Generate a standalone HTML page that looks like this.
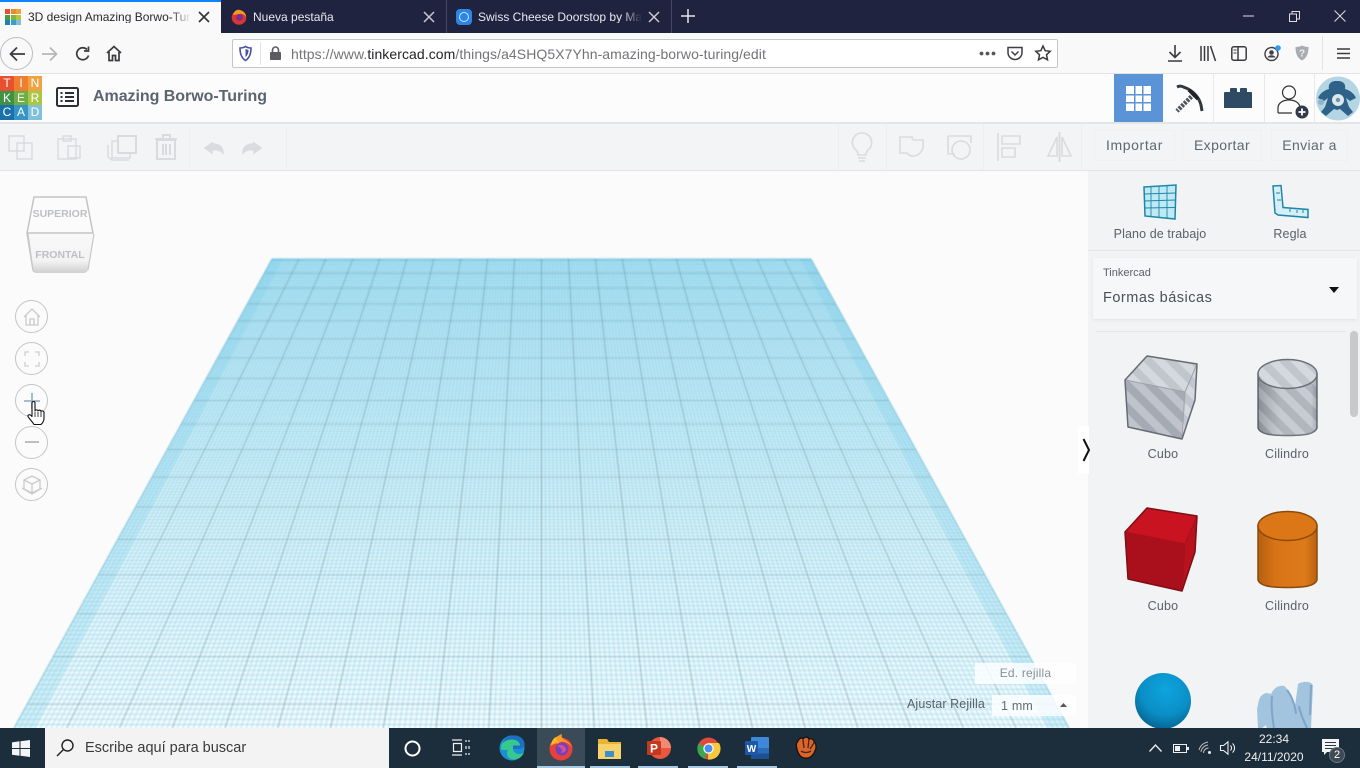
<!DOCTYPE html>
<html lang="es"><head><meta charset="utf-8"><title>3D design Amazing Borwo-Turing</title>
<style>
html,body{margin:0;padding:0;width:1360px;height:768px;overflow:hidden;background:#f9f9fa;font-family:"Liberation Sans",sans-serif}
.a{position:absolute}
.t{position:absolute;white-space:nowrap;line-height:1}
svg{position:absolute;overflow:visible}
.tb{position:absolute;top:130px;height:31px;border:1px solid #eef0f2;box-sizing:border-box;color:#5f6770;font-size:14px;line-height:29px;text-align:center;letter-spacing:.4px}
.cb{position:absolute;left:15px;width:33px;height:33px;border:1px solid #c4c5c7;border-radius:50%;box-sizing:border-box;background:#fbfbfb}
.lg{position:absolute;width:14px;height:14.67px;color:#fff;font-size:12px;text-align:center;line-height:15px}
.dv{position:absolute;width:1px;background:#eceef0}
</style></head><body>

<!-- scene -->
<div class="a" style="left:0;top:171px;width:1088px;height:557px;background:#fbfbfb"></div>
<canvas id="g" class="a" width="1088" height="557" style="left:0;top:171px;filter:blur(.4px)"></canvas>

<!-- tab bar -->
<div class="a" style="left:0;top:0;width:1360px;height:33px;background:#202340"></div>
<div class="a" style="left:0;top:0;width:221px;height:33px;background:#f9f9fa"></div>
<div class="a" style="left:0;top:0;width:221px;height:2px;background:#0a84ff"></div>
<div class="a" style="left:5px;top:9px;width:16px;height:16px;display:grid;grid-template-columns:repeat(3,5px);grid-auto-rows:5px;gap:.5px">
<i style="background:#e8502f"></i><i style="background:#ee8a2e"></i><i style="background:#f0a23c"></i><i style="background:#4d9a45"></i><i style="background:#7db442"></i><i style="background:#b5c742"></i><i style="background:#1e7fb8"></i><i style="background:#3d9ccb"></i><i style="background:#7cc0dc"></i></div>
<div class="t" style="left:28px;top:11px;width:163px;overflow:hidden;font-size:12px;color:#2a2a2e">3D design Amazing Borwo-Turing</div>
<div class="a" style="left:171px;top:6px;width:20px;height:22px;background:linear-gradient(90deg,rgba(249,249,250,0),#f9f9fa)"></div>
<svg style="left:198px;top:11px" width="12" height="12" fill="none" stroke="#333" stroke-width="1.6"><path d="M1 1l10 10M11 1L1 11"/></svg>
<svg style="left:231px;top:9px" width="16" height="16"><circle cx="8" cy="8.5" r="7.3" fill="#d8362f"/><path d="M2 6C3 2 6 0 9 1c4 1 6 4 6 7-2-3-5-4-7-3z" fill="#f59a23"/><circle cx="8.5" cy="8.5" r="3.4" fill="#7a2e8f"/></svg>
<div class="t" style="left:253px;top:11px;font-size:12px;color:#e8e8ee">Nueva pestaña</div>
<svg style="left:423px;top:11px" width="12" height="12" fill="none" stroke="#c9cad3" stroke-width="1.5"><path d="M1 1l10 10M11 1L1 11"/></svg>
<div class="dv" style="left:446px;top:0;height:33px;background:#44475f"></div>
<div class="a" style="left:456px;top:9px;width:16px;height:16px;border-radius:4px;background:#2b86e6"></div>
<div class="a" style="left:459px;top:12px;width:8px;height:8px;border:1px solid #cfe6ff;border-radius:50%"></div>
<div class="t" style="left:478px;top:11px;width:164px;overflow:hidden;font-size:12px;color:#e8e8ee">Swiss Cheese Doorstop by Matt</div>
<div class="a" style="left:622px;top:6px;width:20px;height:22px;background:linear-gradient(90deg,rgba(32,35,64,0),#202340)"></div>
<svg style="left:648px;top:11px" width="12" height="12" fill="none" stroke="#c9cad3" stroke-width="1.5"><path d="M1 1l10 10M11 1L1 11"/></svg>
<div class="dv" style="left:671px;top:0;height:33px;background:#44475f"></div>
<svg style="left:681px;top:9px" width="14" height="14" fill="none" stroke="#e5e5ea" stroke-width="1.5"><path d="M7 0v14M0 7h14"/></svg>
<svg style="left:1243px;top:15px" width="11" height="2"><path d="M0 1h11" stroke="#ddd"/></svg>
<svg style="left:1289px;top:11px" width="11" height="11" fill="none" stroke="#ddd"><path d="M.5 3h7v7.500h-7zM3 3V.5h7.500V8H8"/></svg>
<svg style="left:1334px;top:10px" width="12" height="12" fill="none" stroke="#ddd"><path d="M.5.5l11 11M11.500.5l-11 11"/></svg>

<!-- nav bar -->
<div class="a" style="left:0;top:33px;width:1360px;height:41px;background:#f9f9fa;border-bottom:1px solid #e2e2e4;box-sizing:border-box"></div>
<div class="a" style="left:0;top:37px;width:33px;height:33px;border:1px solid #bdbdc0;border-radius:50%;box-sizing:border-box;margin-left:0"></div>
<svg style="left:9px;top:46px" width="16" height="16" fill="none" stroke="#3a3a3f" stroke-width="1.7"><path d="M16 8H1.500M8 1.500L1.500 8 8 14.500"/></svg>
<svg style="left:42px;top:46px" width="16" height="16" fill="none" stroke="#b5b5b8" stroke-width="1.7"><path d="M0 8h14.500M8 1.500L14.500 8 8 14.500"/></svg>
<svg style="left:75px;top:46px" width="16" height="16" fill="none" stroke="#3a3a3f" stroke-width="1.7"><path d="M13.500 9.500A6 6 0 1 1 12 3.500"/><path d="M13.500 .5v4.500H9" /></svg>
<svg style="left:106px;top:45px" width="16" height="17" fill="none" stroke="#3a3a3f" stroke-width="1.7"><path d="M1 8l7-6.500L15 8M3 7v8.500h3.500v-5h3v5H13V7"/></svg>
<div class="a" style="left:232px;top:39px;width:826px;height:29px;background:#fff;border:1px solid #c6c6c8;border-radius:2px;box-sizing:border-box"></div>
<svg style="left:239px;top:46px" width="13" height="15"><path d="M1 2c2 0 4-.5 5.500-1.500C8 1.500 10 2 12 2c0 6-1.500 10-5.500 12.500C2.500 12 1 8 1 2z" fill="none" stroke="#4a4fa8" stroke-width="1.6"/><path d="M6.500 3v8c2-1.500 3-4 3-7z" fill="#4a4fa8"/></svg>
<div class="dv" style="left:260px;top:42px;height:23px;background:#e3e3e5"></div>
<svg style="left:269px;top:46px" width="13" height="15"><rect x="1" y="6" width="11" height="8" rx="1" fill="#5b5b60"/><path d="M3.500 6V4a3 3 0 0 1 6 0v2" fill="none" stroke="#5b5b60" stroke-width="1.600"/></svg>
<div class="t" style="left:291px;top:47px;font-size:14px;letter-spacing:.07px;color:#737378">https://www.<span style="color:#1f1f24">tinkercad.com</span>/things/a4SHQ5X7Yhn-amazing-borwo-turing/edit</div>
<svg style="left:979px;top:51px" width="17" height="5" fill="#55555a"><circle cx="2.500" cy="2.500" r="1.900"/><circle cx="8.500" cy="2.500" r="1.900"/><circle cx="14.500" cy="2.500" r="1.900"/></svg>
<svg style="left:1007px;top:46px" width="16" height="15" fill="none" stroke="#3f3f44" stroke-width="1.500"><path d="M1 1.500h14v5a7 7 0 0 1-14 0z"/><path d="M4.500 5.500L8 9l3.500-3.500"/></svg>
<svg style="left:1035px;top:45px" width="16" height="16" fill="none" stroke="#3a3a3f" stroke-width="1.500"><path d="M8 1l2.200 4.700 5 .6-3.700 3.500 1 5L8 12.300 3.500 14.800l1-5L.8 6.300l5-.6z"/></svg>
<svg style="left:1168px;top:45px" width="14" height="17" fill="none" stroke="#3a3a3f" stroke-width="1.600"><path d="M7 0v12M1.500 7L7 12.500 12.500 7M0 16h14"/></svg>
<svg style="left:1200px;top:46px" width="16" height="15" fill="none" stroke="#3a3a3f" stroke-width="1.500"><path d="M1 0v15M4.500 0v15M8 0v15M10.500 0l5 15"/></svg>
<svg style="left:1231px;top:46px" width="16" height="15" fill="none" stroke="#3a3a3f" stroke-width="1.500"><rect x=".8" y=".8" width="14.400" height="13.400" rx="2"/><path d="M7 1v13"/><path d="M2.500 4h3M2.500 7h3" stroke-width="1"/></svg>
<svg style="left:1264px;top:45px" width="17" height="17"><circle cx="7.500" cy="9" r="6.500" fill="none" stroke="#3f3f44" stroke-width="1.400"/><circle cx="7.500" cy="7.500" r="2.300" fill="#3f3f44"/><path d="M3.500 12.500c1-3 7-3 8 0z" fill="#3f3f44"/><circle cx="14" cy="3" r="2.800" fill="#2e9cf0"/></svg>
<svg style="left:1295px;top:45px" width="14" height="16"><path d="M7 .5c2 1 4 1.500 6.500 1.500 0 7-2 11-6.500 13.500C2.500 13 .5 9 .5 2 3 2 5 1.500 7 .5z" fill="#a9acb2"/><text x="7" y="11.500" font-size="10" font-weight="bold" fill="#eee" text-anchor="middle" font-family="Liberation Sans">?</text></svg>
<div class="dv" style="left:1322px;top:36px;height:34px;background:#e3e3e5"></div>
<svg style="left:1337px;top:48px" width="13" height="11" stroke="#3a3a3f" stroke-width="1.500"><path d="M0 1h13M0 5.500h13M0 10h13"/></svg>

<!-- tinkercad header -->
<div class="a" style="left:0;top:74px;width:1360px;height:48px;background:#fcfcfc"></div>
<div class="a" style="left:0;top:122px;width:1360px;height:2px;background:#e4e5e7"></div>
<div class="a" style="left:0;top:76px;width:42px;height:44px">
<div class="lg" style="left:0;top:0;background:#e9502e">T</div><div class="lg" style="left:14px;top:0;background:#ee7f2e">I</div><div class="lg" style="left:28px;top:0;background:#efa242">N</div>
<div class="lg" style="left:0;top:14.700px;background:#3f9145">K</div><div class="lg" style="left:14px;top:14.700px;background:#6eae43">E</div><div class="lg" style="left:28px;top:14.700px;background:#a9c644">R</div>
<div class="lg" style="left:0;top:29.300px;background:#1a70ab">C</div><div class="lg" style="left:14px;top:29.300px;background:#3595c6">A</div><div class="lg" style="left:28px;top:29.300px;background:#7fc1dc">D</div>
</div>
<svg style="left:56px;top:87px" width="23" height="20" fill="none" stroke="#2b2f36" stroke-width="2"><rect x="1" y="1" width="21" height="18" rx="1.500"/><path d="M9 6h9M9 10h9M9 14h9M4.500 6h2M4.500 10h2M4.500 14h2"/></svg>
<div class="t" style="left:93px;top:89px;font-size:16px;font-weight:bold;color:#5b6570;letter-spacing:-.04px">Amazing Borwo-Turing</div>

<div class="a" style="left:1114px;top:74px;width:49px;height:48px;background:#5a93d6"></div>
<div class="a" style="left:1126px;top:86px;width:25px;height:25px;background:
linear-gradient(#5a93d6,#5a93d6) 0 8px/25px 1.500px no-repeat,linear-gradient(#5a93d6,#5a93d6) 0 16px/25px 1.500px no-repeat,linear-gradient(#5a93d6,#5a93d6) 8px 0/1.500px 25px no-repeat,linear-gradient(#5a93d6,#5a93d6) 16px 0/1.500px 25px no-repeat,#fff"></div>
<svg style="left:1174px;top:84px" width="30" height="30" fill="none"><path d="M3 3c4-2 6 0 9 1 7 3 13 9 15 17l1 6" stroke="#33383e" stroke-width="3"/><path d="M20 10L3 27" stroke="#4d5258" stroke-width="4.500" stroke-dasharray="2.500 1.200"/><path d="M15 6l9 9" stroke="#1f2328" stroke-width="3.500"/></svg>
<svg style="left:1224px;top:87px" width="28" height="21" fill="#2f4a63"><path d="M1 5h5V2q0-1 1-1h5q1 0 1 1v3h3V2q0-1 1-1h5q1 0 1 1v3h4q1 0 1 1v15H0V6q0-1 1-1z"/></svg>
<div class="dv" style="left:1213px;top:74px;height:48px;background:#e9e9eb"></div>
<div class="dv" style="left:1264px;top:74px;height:48px;background:#e9e9eb"></div>
<div class="dv" style="left:1314px;top:74px;height:48px;background:#e9e9eb"></div>
<svg style="left:1277px;top:84px" width="34" height="34"><circle cx="12" cy="8.500" r="6.500" fill="none" stroke="#333" stroke-width="1.200"/><path d="M1 29v-5c0-5 5-8 11-8s11 3 11 8M1 29h14" fill="none" stroke="#333" stroke-width="1.200"/><circle cx="25" cy="28" r="6.500" fill="#2f3b47"/><path d="M25 24.500v7M21.500 28h7" stroke="#fff" stroke-width="1.800"/></svg>
<svg style="left:1316px;top:76px" width="44" height="45"><defs><clipPath id="av"><circle cx="22" cy="22.500" r="22"/></clipPath></defs><g clip-path="url(#av)"><rect width="44" height="45" fill="#b4d6e4"/><path d="M22 5c6 0 8 4 7 8 4 1 9 4 11 9l-6 3-4-3 3 9 4 5-5 4-8-7-3 1-3-1-8 7-5-4 4-5 3-9-4 3-6-3c2-5 7-8 11-9-1-4 1-8 7-8z" fill="#2f6288"/><circle cx="5" cy="26" r="3" fill="#8fb4c8"/><circle cx="22" cy="24" r="6" fill="#dde8ec"/><circle cx="22" cy="24" r="2.200" fill="#6d94ad"/></g></svg>

<!-- toolbar -->
<div class="a" style="left:0;top:124px;width:1360px;height:47px;background:#f3f4f6;border-bottom:1px solid #e2e3e6;box-sizing:border-box"></div>
<svg style="left:8px;top:134px" width="280" height="26" fill="none" stroke="#d9dbdf" stroke-width="1.500">
<path d="M1 2h15v15H1zM9 9h15v16H9z"/>
<path d="M50 5h18v20H50zM55 2h8v5h-8zM60 12h12v12H60z"/>
<path d="M104 7h18v17h-18z" /><path d="M100 11v12l4 3h17" /><path d="M110 2h18v17h-18z" fill="#f3f4f6" stroke-width="2"/>
<path d="M147 5h22M155 4V1h7v3M149 6h18v19h-18zM155 10v11M158 10v11M162 10v11" stroke-width="2"/>
<path d="M204 9l-7 5 7 5v-3c5-1 8 0 11 3 0-6-4-9-11-9z" fill="#d9dbdf"/>
<path d="M246 9l7 5-7 5v-3c-5-1-8 0-11 3 0-6 4-9 11-9z" fill="#d9dbdf"/>
</svg>
<div class="dv" style="left:189px;top:128px;height:40px"></div>
<div class="dv" style="left:286px;top:128px;height:40px"></div>
<div class="dv" style="left:838px;top:124px;height:46px"></div>
<div class="dv" style="left:886px;top:124px;height:46px"></div>
<div class="dv" style="left:983px;top:124px;height:46px"></div>
<div class="dv" style="left:1081px;top:124px;height:46px"></div>
<svg style="left:850px;top:132px" width="222" height="30" fill="none" stroke="#d9dbde" stroke-width="1.600">
<path d="M12 1a9.500 9.500 0 0 0-6 17c1.500 1.500 2 3 2 5h8c0-2 .5-3.500 2-5a9.500 9.500 0 0 0-6-17zM8 26h8M9 29h6"/>
<path d="M50 5h12c0 2 1 3 3 3h8v4c1 8-7 15-14 11l-2-2H50z"/>
<path d="M98 4h23v7M98 4v18h7" /><circle cx="111" cy="18" r="9"/>
<path d="M148 1v28" /><path d="M152 4h18v8h-18zM152 16h13v9h-13z"/>
<path d="M198 24l9-19v19zM221 24l-9-19v19z"/><path d="M209.500 0v30" stroke-width="2"/>
</svg>
<div class="tb" style="left:1094px;width:81px;letter-spacing:.6px">Importar</div>
<div class="tb" style="left:1182px;width:80px">Exportar</div>
<div class="tb" style="left:1271px;width:77px;border-left-color:#eef0f2">Enviar a</div>

<!-- right panel -->
<div class="a" style="left:1088px;top:171px;width:272px;height:557px;background:#f2f3f5"></div>
<svg style="left:1142px;top:184px" width="36" height="36" fill="#bfeaf5" stroke="#1e86a8" stroke-width="1.500"><path d="M2 3l32-2-1 34-30-3z"/><path d="M1.800 10l32-1M2 17l31.500-1M2.300 24l31-.5M9 3v29M17 2.500V33M25 2V34" fill="none" stroke-width=".9"/></svg>
<svg style="left:1272px;top:185px" width="37" height="35" fill="#d6eff6" stroke="#1e86a8" stroke-width="1.500"><path d="M1 1l8-.5 2 22 25 2v8l-30-2.500-3-2z"/><path d="M8 8H4M9 15H5M18 24v3M25 25v3M31 25v3" fill="none" stroke-width="1"/></svg>
<div class="t" style="left:1090px;width:140px;text-align:center;top:228px;font-size:12.500px;color:#5b6069;letter-spacing:.1px">Plano de trabajo</div>
<div class="t" style="left:1240px;width:100px;text-align:center;top:228px;font-size:12.500px;color:#5b6069;letter-spacing:.1px">Regla</div>
<div class="a" style="left:1088px;top:250px;width:272px;height:1px;background:#e6e7ea"></div>
<div class="a" style="left:1093px;top:258px;width:264px;height:61px;background:#f6f7f8;box-shadow:0 1px 3px rgba(0,0,0,.07)"></div>
<div class="t" style="left:1103px;top:268px;font-size:11px;color:#5c6068">Tinkercad</div>
<div class="t" style="left:1103px;top:291px;font-size:14.500px;color:#4a4f58;letter-spacing:.5px">Formas básicas</div>
<svg style="left:1329px;top:287px" width="10" height="6"><path d="M0 0h10L5 6z" fill="#111"/></svg>
<div class="a" style="left:1096px;top:331px;width:250px;height:1px;background:#e6e7ea"></div>
<div class="a" style="left:1350px;top:331px;width:8px;height:86px;border-radius:4px;background:#c8c9cb"></div>

<!-- shapes -->
<svg style="left:1088px;top:340px" width="272" height="388">
<defs>
<pattern id="st" width="16" height="16" patternUnits="userSpaceOnUse" patternTransform="rotate(-45)"><rect width="16" height="16" fill="#a5abb5"/><rect width="8" height="16" fill="#bfc4cc"/></pattern>
<pattern id="st2" width="16" height="16" patternUnits="userSpaceOnUse" patternTransform="rotate(-45)"><rect width="16" height="16" fill="#c0c5ce"/><rect width="8" height="16" fill="#d5d8df"/></pattern>
<linearGradient id="cy" x1="0" x2="1" y1="0" y2="0"><stop offset="0" stop-color="#000" stop-opacity=".18"/><stop offset=".4" stop-color="#fff" stop-opacity=".12"/><stop offset=".9" stop-color="#fff" stop-opacity=".12"/><stop offset="1" stop-color="#000" stop-opacity=".12"/></linearGradient>
<linearGradient id="co" x1="0" x2="1" y1="0" y2="0"><stop offset="0" stop-color="#b55f10"/><stop offset=".3" stop-color="#d97416"/><stop offset=".8" stop-color="#dd7a1a"/><stop offset="1" stop-color="#b8620f"/></linearGradient>
<radialGradient id="sp" cx=".55" cy=".3" r=".75"><stop offset="0" stop-color="#0ea5de"/><stop offset=".6" stop-color="#0a8ec6"/><stop offset="1" stop-color="#055f8a"/></radialGradient>
</defs>
<g stroke-linejoin="round">
<!-- grey cube -->
<path d="M59 16l50 8-12 28-60-12z" fill="url(#st2)" stroke="#a0a4ab" stroke-width="1"/>
<path d="M37 40l60 12-3 47-54-12z" fill="url(#st)" stroke="#a0a4ab" stroke-width="1"/>
<path d="M97 52l12-28-2 36-13 39z" fill="url(#st2)" stroke="#a0a4ab" stroke-width="1"/>
<path d="M59 16l50 8-2 36-13 39-54-12-3-47z" fill="none" stroke="#676b72" stroke-width="1.500"/>
<!-- red cube -->
<path d="M59 168l50 8-12 28-60-12z" fill="#c91320" stroke="#b20f1c" stroke-width="1"/>
<path d="M37 192l60 12-3 47-54-12z" fill="#a9101b" stroke="#a9101b" stroke-width="1"/>
<path d="M97 204l12-28-2 36-13 39z" fill="#b9121f" stroke="#a9101b" stroke-width="1"/>
<path d="M59 168l50 8-2 36-13 39-54-12-3-47z" fill="none" stroke="#7e0f16" stroke-width="1.500"/>
</g>
<!-- grey cylinder -->
<path d="M170 34v54c2 6 12 7.500 29.500 7.500S227 94 229 88V34z" fill="url(#st)" stroke="#6a6e75" stroke-width="1.500"/>
<path d="M170 34v54c2 6 12 7.500 29.500 7.500S227 94 229 88V34z" fill="url(#cy)"/>
<ellipse cx="199.500" cy="34" rx="29.500" ry="14.500" fill="url(#st2)" stroke="#6a6e75" stroke-width="1.500"/>
<!-- orange cylinder -->
<path d="M170 186v54c2 6 12 7.500 29.500 7.500S227 246 229 240V186z" fill="url(#co)" stroke="#8a4a0c" stroke-width="1.500"/>
<ellipse cx="199.500" cy="186" rx="29.500" ry="14.500" fill="#db7716" stroke="#8a4a0c" stroke-width="1.500"/>
<!-- sphere -->
<circle cx="75" cy="361" r="28" fill="url(#sp)"/>
<!-- squiggle -->
<path d="M171 360c1-4 5-7 8-7l4 1c3-7 9-9 13-8 4 2 8 12 11 20l3-22c3-2 9-3 13-1l2 2-2 44h-44l-1-4-5 4h-3l-1-20z" fill="#a3c4df"/>
<path d="M184 356c-1 10 0 20 2 32M199 350c4 5 8 14 9 24M211 366c1 8 5 15 8 22M223 345l-1 30" fill="none" stroke="#7fa5c7" stroke-width="2"/>
</svg>
<div class="t" style="left:1113px;width:100px;text-align:center;top:448px;font-size:12.500px;color:#5b6069;letter-spacing:.2px">Cubo</div>
<div class="t" style="left:1237px;width:100px;text-align:center;top:448px;font-size:12.500px;color:#5b6069;letter-spacing:.2px">Cilindro</div>
<div class="t" style="left:1113px;width:100px;text-align:center;top:600px;font-size:12.500px;color:#5b6069;letter-spacing:.2px">Cubo</div>
<div class="t" style="left:1237px;width:100px;text-align:center;top:600px;font-size:12.500px;color:#5b6069;letter-spacing:.2px">Cilindro</div>

<!-- collapse -->
<div class="a" style="left:1078px;top:426px;width:11px;height:48px;background:#fff"></div>
<svg style="left:1082px;top:438px" width="10" height="24" fill="none" stroke="#111" stroke-width="2"><path d="M1.500 1L7 12 1.500 23"/></svg>

<!-- view cube -->
<svg style="left:25px;top:194px" width="72" height="82">
<defs><linearGradient id="cb" x1="0" x2="0" y1="0" y2="1"><stop offset="0" stop-color="#f8f8f8"/><stop offset=".7" stop-color="#f3f3f3"/><stop offset="1" stop-color="#d2d2d2"/></linearGradient></defs>
<path d="M9 3h52l7 36-6 37q-1 2-3 2H11q-2 0-3-2L2 39z" fill="#fbfbfb" stroke="#c4c4c6" stroke-width="1.500" stroke-linejoin="round"/>
<path d="M3 40h66l-6 36q-1 2-3 2H11q-2 0-3-2z" fill="url(#cb)"/>
<path d="M2 39h66" stroke="#c4c4c6" stroke-width="1.500"/>
<path d="M3 40l5 36M69 40l-6 36" stroke="#c8c8ca" stroke-width="1.200"/>
</svg>
<div class="t" style="left:27px;width:66px;text-align:center;top:209px;font-size:10.500px;font-weight:bold;color:#bebfc3">SUPERIOR</div>
<div class="t" style="left:27px;width:66px;text-align:center;top:250px;font-size:10.500px;font-weight:bold;color:#bebfc3">FRONTAL</div>

<!-- circle buttons -->
<div class="cb" style="top:300px"></div><div class="cb" style="top:342px"></div><div class="cb" style="top:384px"></div><div class="cb" style="top:426px"></div><div class="cb" style="top:468px"></div>
<svg style="left:15px;top:300px" width="34" height="200" fill="none" stroke="#c9cacd" stroke-width="1.300">
<path d="M9 17l8-8 8 8M11 15v10h12V15M15 25v-6h4v6"/>
<path d="M10 56v-4h4M20 52h4v4M24 62v4h-4M14 66h-4v-4" stroke-width="1.600" stroke="#d6d7da"/>
<path d="M17 93v16M9 101h16" stroke="#9db4c7" stroke-width="1.800"/>
<path d="M10 142h14" stroke="#b5b6ba" stroke-width="1.800"/>
<path d="M17 176l8 4v9l-8 4-8-4v-9zM9 180l8 4 8-4M17 184v9M7 188l10 6 10-6"/>
</svg>
<!-- cursor -->
<svg style="left:27px;top:401px" width="20" height="25"><path d="M5 2c0-2 3-2 3 0v8c0-1.500 3-1.500 3 0 0-1.200 3-1.200 3 .5 0-1 3-1 3 1v6c0 3-2 5-3 6H7c-1-2-5-6-6-8-.5-1.500 1.500-2.500 3-1l1 1z" fill="#fff" stroke="#111" stroke-width="1.100" stroke-linejoin="round"/><path d="M8 11v5M11 11v5M14 11v5" stroke="#111" stroke-width=".8"/></svg>

<!-- grid controls -->
<div class="a" style="left:975px;top:663px;width:101px;height:21px;background:rgba(255,255,255,.8)"></div>
<div class="t" style="left:975px;width:101px;text-align:center;top:667px;font-size:12px;color:#8a8e94;letter-spacing:.2px">Ed. rejilla</div>
<div class="t" style="left:907px;top:698px;font-size:12.500px;color:#5a626b;letter-spacing:.1px">Ajustar Rejilla</div>
<div class="a" style="left:992px;top:695px;width:84px;height:21px;background:rgba(255,255,255,.8)"></div>
<div class="t" style="left:1001px;top:700px;font-size:12.500px;color:#666b72;letter-spacing:.2px">1 mm</div>
<svg style="left:1060px;top:703px" width="7" height="4"><path d="M0 4h7L3.500 0z" fill="#555"/></svg>

<!-- taskbar -->
<div class="a" style="left:0;top:728px;width:1360px;height:40px;background:#1c2d3b"></div>
<svg style="left:12px;top:740px" width="18" height="17" fill="#f2f4f6"><path d="M0 2.400L7.500 1.300V8H0zM8.500 1.200L18 0v8H8.500zM0 9h7.500v6.700L0 14.700zM8.500 9H18v8l-9.500-1.200z"/></svg>
<div class="a" style="left:45px;top:728px;width:344px;height:40px;background:#f3f3f3"></div>
<svg style="left:56px;top:739px" width="18" height="18" fill="none" stroke="#222" stroke-width="1.400"><circle cx="11.500" cy="6.500" r="5.500"/><path d="M7.500 10.500L1 17"/></svg>
<div class="t" style="left:85px;top:741px;font-size:14.500px;color:#3a3a3a">Escribe aquí para buscar</div>
<svg style="left:404px;top:740px" width="17" height="17" fill="none" stroke="#fff" stroke-width="2"><circle cx="8.500" cy="8.500" r="7"/></svg>
<svg style="left:452px;top:739px" width="18" height="18" fill="none" stroke="#f0f0f0" stroke-width="1.200"><path d="M0 1h10M0 16h10M1.500 4.500h8v8h-8zM14 1v2M17 1v2M14 7v3M17 7v3M14 14v2M17 14v2" /></svg>
<div class="a" style="left:537px;top:728px;width:48px;height:40px;background:#3b4a57"></div>
<svg style="left:499px;top:735px" width="26" height="26"><circle cx="13" cy="13" r="12.500" fill="#1a8fd6"/><path d="M2 14C2 6 8 .5 15 .5c6 0 10.500 4 10.500 9 0 3-2.500 4.500-5.500 4.500h-6c.5 3 3 5 6 5 2 0 3.500-.5 5-1.500-2 4.500-6 7-10 7-7 0-8-6-6-10-3 1-6 0-7 0z" fill="#37c88f"/><path d="M14 14h6c3 0 5.500-1.500 5.500-4.500 0-5-4.500-9-10.500-9-5 0-10 3-12 8 3-3 7-4 10-4 5 0 8 3 8 6h-7z" fill="#1c6fc4"/></svg>
<svg style="left:548px;top:734px" width="26" height="27"><circle cx="13" cy="15" r="11.500" fill="#e8413b"/><path d="M2 12C4 5 9 2 14 0c-1 3 0 4 3 6 4 2 7 5 7 9 0-3-3-5-5-6-3-2-7-2-9 1-1-1-2-1-3 0-1 0-3 1-5 2z" fill="#f89c25"/><path d="M4 11C3 7 6 3 9 3c-1 3 0 4 2 5-3 0-5 1-7 3z" fill="#fbb829"/><circle cx="14" cy="15" r="6.500" fill="#7543b8"/><path d="M9 12c3-2 8-1 9 3 0 2-2 4-5 4 2-2 1-5-4-7z" fill="#d04fa0"/></svg>
<svg style="left:598px;top:738px" width="23" height="21"><path d="M0 1h9l2 3h12v17H0z" fill="#e9b434"/><rect y="6" width="23" height="15" fill="#f7d26b"/><rect x="7" y="13" width="9" height="6" fill="#3c8fce"/></svg>
<svg style="left:647px;top:736px" width="24" height="24"><circle cx="13" cy="12" r="11" fill="#e9573f"/><path d="M13 1a11 11 0 0 1 11 11H13z" fill="#f08a70"/><rect y="5" width="14" height="14" rx="1" fill="#c4391d"/><text x="7" y="16.500" font-size="12" font-weight="bold" fill="#fff" text-anchor="middle" font-family="Liberation Sans">P</text></svg>
<svg style="left:697px;top:737px" width="23" height="23"><circle cx="11.500" cy="11.500" r="11" fill="#e04a3a"/><path d="M11.500 11.500L1.500 6.500A11 11 0 0 0 8 22z" fill="#3da64d"/><path d="M11.500 6H22a11 11 0 0 1-11 16.500z" fill="#f7c93c"/><circle cx="11.500" cy="11.500" r="5.200" fill="#fff"/><circle cx="11.500" cy="11.500" r="4" fill="#4a8ef0"/></svg>
<svg style="left:745px;top:737px" width="24" height="22"><rect x="6" y="0" width="18" height="22" rx="1" fill="#3f87d9"/><rect x="6" y="11" width="18" height="5.500" fill="#2b6cb8"/><rect x="6" y="16.500" width="18" height="5.500" fill="#1e5096"/><rect x="0" y="4" width="13" height="14" rx="1" fill="#1d57a8"/><text x="6.500" y="15" font-size="10" font-weight="bold" fill="#fff" text-anchor="middle" font-family="Liberation Sans">W</text></svg>
<svg style="left:795px;top:736px" width="22" height="23"><path d="M3 5c2-4 4-3 5-2 2-3 5-2 6 0 3-1 5 1 5 3 2 1 3 5 1 9-2 5-6 8-10 7-4 0-7-4-8-9C1 10 1 7 3 5z" fill="#d9642e" stroke="#1a1208" stroke-width="1.300"/><path d="M8 4l1 8M14 3l-1 9M19 7l-4 6M6 15c3 2 7 2 10 0" fill="none" stroke="#4a2410" stroke-width="1.300"/></svg>
<div class="a" style="left:537px;top:766px;width:48px;height:2px;background:#a7c8e0"></div>
<div class="a" style="left:590px;top:766px;width:40px;height:2px;background:#a7c8e0"></div>
<div class="a" style="left:638px;top:766px;width:40px;height:2px;background:#a7c8e0"></div>
<div class="a" style="left:688px;top:766px;width:40px;height:2px;background:#a7c8e0"></div>
<div class="a" style="left:737px;top:766px;width:40px;height:2px;background:#a7c8e0"></div>
<svg style="left:1149px;top:744px" width="13" height="8" fill="none" stroke="#eee" stroke-width="1.300"><path d="M.5 7.500L6.500 1l6 6.500"/></svg>
<svg style="left:1173px;top:744px" width="16" height="9"><rect x=".5" y=".5" width="13" height="8" fill="none" stroke="#eee"/><rect x="2" y="2" width="5" height="5" fill="#eee"/><rect x="14" y="3" width="2" height="3" fill="#eee"/></svg>
<svg style="left:1198px;top:741px" width="14" height="14" fill="none" stroke="#bbb" stroke-width="1"><path d="M1 9a11 11 0 0 1 9-8M3 11a8 8 0 0 1 7-7M5.500 12a5 5 0 0 1 5-5"/><circle cx="11.500" cy="11.500" r="1.500" fill="#eee" stroke="none"/></svg>
<svg style="left:1220px;top:741px" width="15" height="14" fill="none" stroke="#eee" stroke-width="1.100"><path d="M.5 4.500h3L8 .8v12.400L3.500 9.500h-3zM10.500 4.500a3.500 3.500 0 0 1 0 5M12.500 2.500a6 6 0 0 1 0 9" /></svg>
<div class="t" style="left:1244px;width:60px;text-align:center;top:733px;font-size:12px;color:#f0f0f0">22:34</div>
<div class="t" style="left:1244px;width:60px;text-align:center;top:751px;font-size:12px;color:#f0f0f0">24/11/2020</div>
<svg style="left:1322px;top:739px" width="18" height="17"><path d="M0 0h17v13H5l-3 3v-3H0z" fill="#f4f4f4"/><path d="M3 3.500h11M3 6.500h11M3 9.500h8" stroke="#2a3947" stroke-width="1"/></svg>
<div class="a" style="left:1329px;top:747px;width:16px;height:16px;border-radius:50%;background:#3d4a55;border:1px solid #6b7680;box-sizing:border-box;color:#fff;font-size:11px;line-height:14px;text-align:center">2</div>

<script>
(function(){
var c=document.getElementById('g').getContext('2d');
var oy=171,H=-231,A=0.0020408,D=5.714e-5,cx=541.5,S=0.55;
function yAt(i){return H+1/(A-i*D)-oy}
function xAt(u,y){return cx+u*(y+oy-H)*S}
var yBot=557,maxI=(A-1/(yBot+oy-H))/D;
var top=yAt(0);
c.save();c.beginPath();c.moveTo(xAt(-1,top),top);c.lineTo(xAt(1,top),top);c.lineTo(xAt(1,yBot),yBot);c.lineTo(xAt(-1,yBot),yBot);c.closePath();c.clip();
var gr=c.createLinearGradient(0,top,0,yBot);gr.addColorStop(0,'#c8ecf7');gr.addColorStop(.5,'#dff4fa');gr.addColorStop(1,'#f4fbfd');
c.fillStyle=gr;c.fillRect(0,0,1088,557);
for(var k=-100;k<=100;k++){if(k%10===0)continue;var u=k/100;c.beginPath();c.moveTo(xAt(u,top),top);c.lineTo(xAt(u,yBot),yBot);
c.strokeStyle='rgba(125,205,232,.62)';c.lineWidth=.9;c.stroke();}
for(var j=0;j<=Math.ceil(maxI*10);j++){if(j%10===0)continue;var y=yAt(j/10);var t=(y-top)/(yBot-top);c.beginPath();c.moveTo(0,y);c.lineTo(1088,y);c.strokeStyle='rgba('+(115+t*25|0)+','+(200+t*10|0)+',230,'+(.55+.1*t)+')';c.lineWidth=.9;c.stroke();}
// margin band
c.fillStyle='rgba(110,200,232,.22)';
c.beginPath();c.moveTo(xAt(-1,top),top);c.lineTo(xAt(-.96,top),top);c.lineTo(xAt(-.96,yBot),yBot);c.lineTo(xAt(-1,yBot),yBot);c.closePath();c.fill();
c.beginPath();c.moveTo(xAt(1,top),top);c.lineTo(xAt(.96,top),top);c.lineTo(xAt(.96,yBot),yBot);c.lineTo(xAt(1,yBot),yBot);c.closePath();c.fill();
c.fillRect(0,top,1088,3);
for(var k=-10;k<=10;k++){var u=k/10;c.beginPath();c.moveTo(xAt(u,top),top);c.lineTo(xAt(u,yBot),yBot);c.strokeStyle='rgba(70,140,160,.62)';c.lineWidth=1;c.stroke();}
for(var i=0;i<=Math.ceil(maxI);i++){var y=yAt(i);c.beginPath();c.moveTo(0,y);c.lineTo(1088,y);c.strokeStyle='rgba(70,145,170,.52)';c.lineWidth=1;c.stroke();}
c.restore();
c.strokeStyle='rgba(90,185,220,.7)';c.lineWidth=1;c.beginPath();c.moveTo(xAt(-1,yBot),yBot);c.lineTo(xAt(-1,top),top);c.lineTo(xAt(1,top),top);c.lineTo(xAt(1,yBot),yBot);c.stroke();
})();
</script>
</body></html>
